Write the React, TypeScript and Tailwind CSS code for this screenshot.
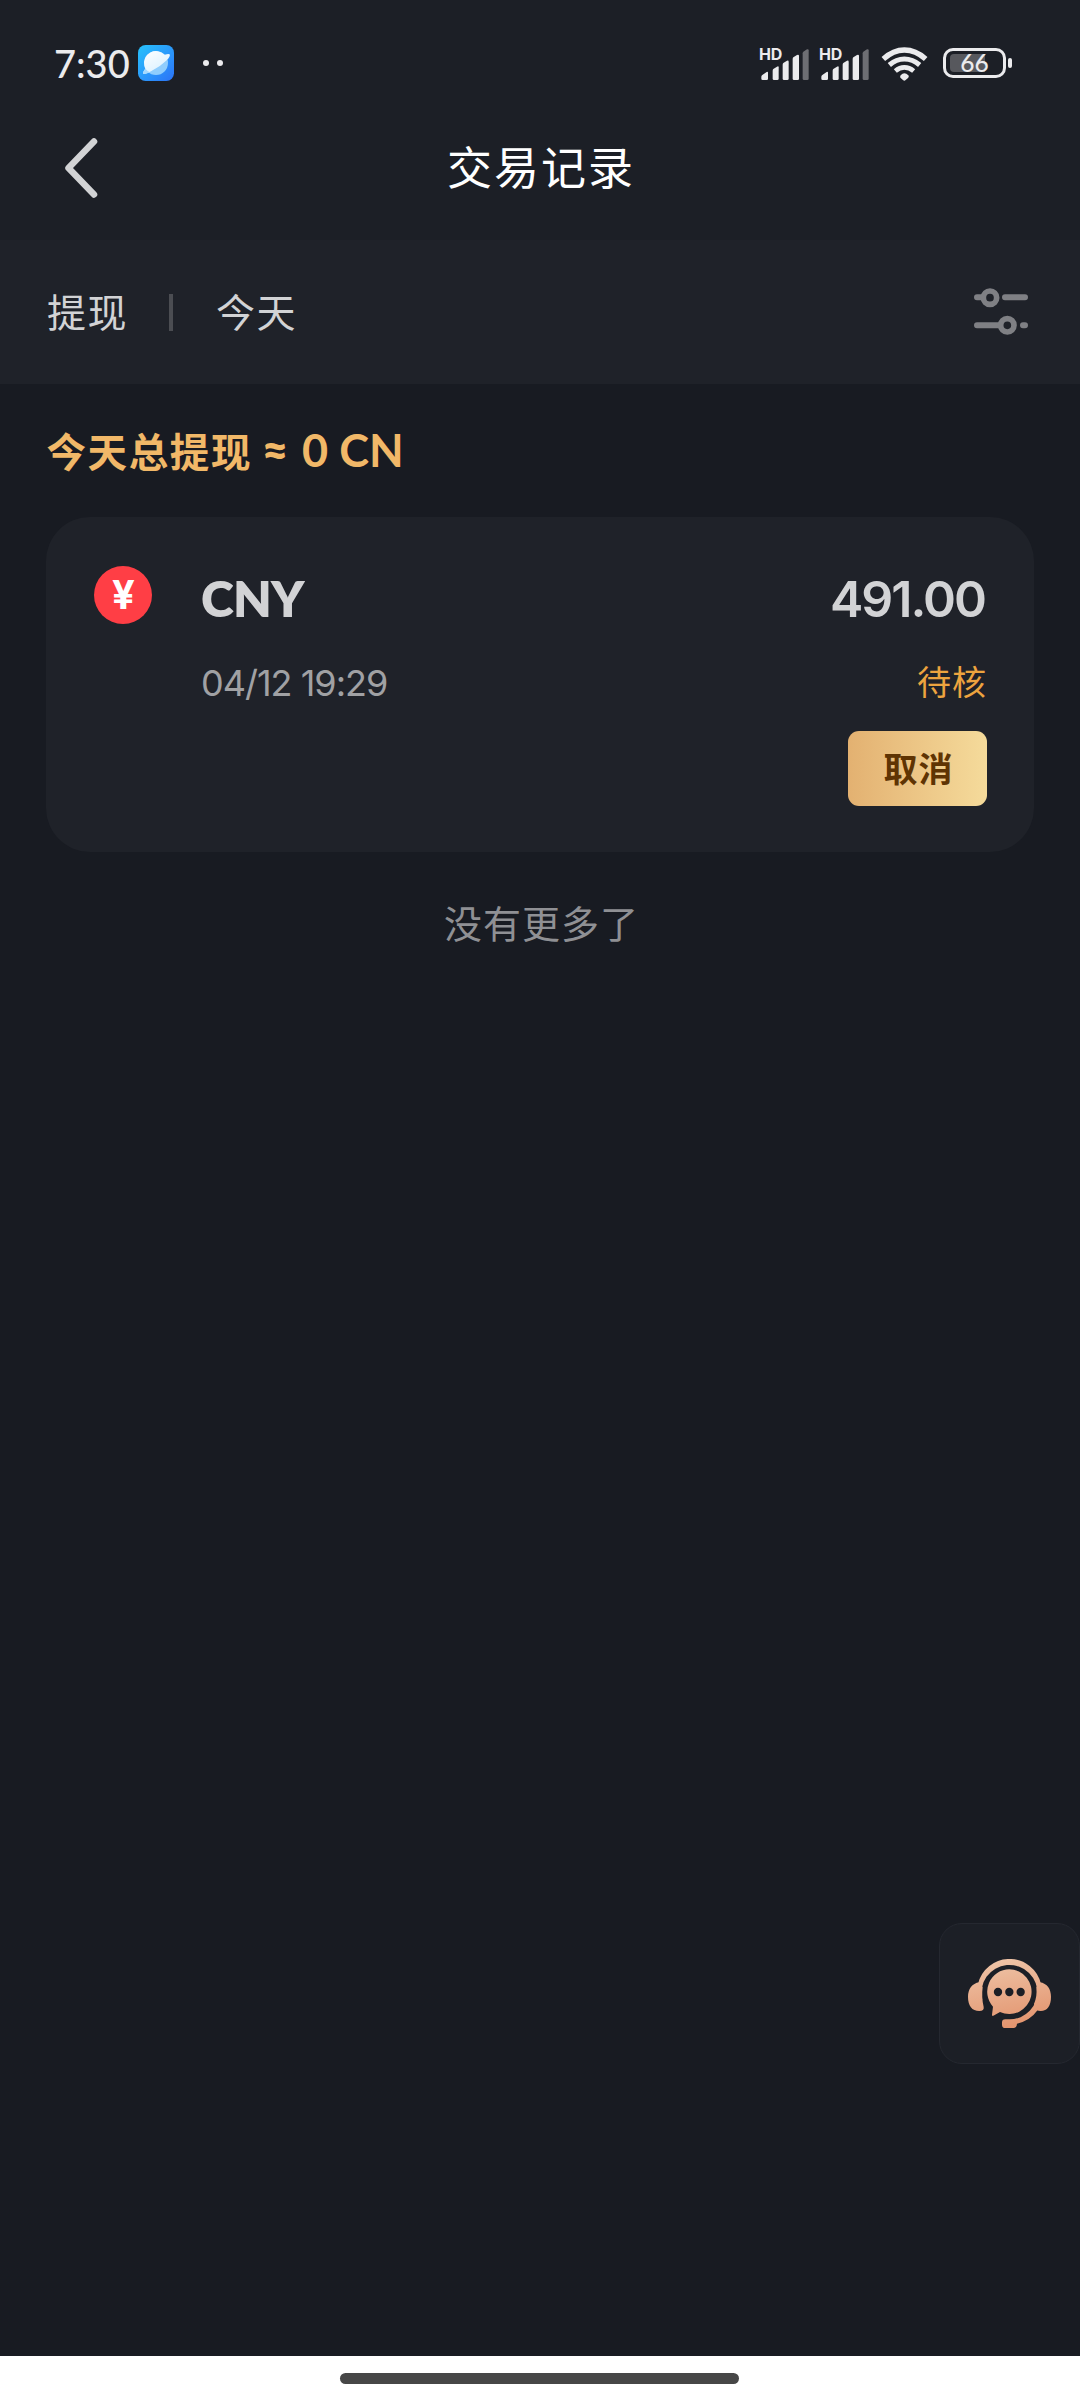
import React from "react";

function BrowserIcon() {
  return (
    <svg className="h-9 w-9" viewBox="0 0 108 108">
      <defs>
        <linearGradient id="sky" x1="0" y1="0" x2="1" y2="1">
          <stop offset="0" stopColor="#27c2fb" />
          <stop offset="0.55" stopColor="#2b97fb" />
          <stop offset="1" stopColor="#2b72f6" />
        </linearGradient>
        <linearGradient id="planet" x1="0" y1="0" x2="0.7" y2="1">
          <stop offset="0" stopColor="#ffffff" />
          <stop offset="1" stopColor="#d8f0ff" />
        </linearGradient>
      </defs>
      <rect width="108" height="108" rx="23" fill="url(#sky)" />
      <circle cx="54" cy="54" r="36" fill="#8fcdfd" />
      <path d="M19 62 A36 36 0 0 1 80 29 Q92 25 95 28 Q98 34 86 46 Q66 66 39 79 Q18 90 16 86 Q14 80 22 71Z" fill="url(#planet)" />
      <path d="M22 71 Q12 84 17 87 Q23 88 36 82 Q28 78 22 71Z" fill="#a5dafe" />
    </svg>
  );
}

function Signal() {
  return (
    <div className="relative h-[35px] w-[50px]">
      <span className="absolute left-0 top-px font-[Inter] text-[16px] leading-[14px] font-bold tracking-[-0.2px]">HD</span>
      <svg className="h-[35px] w-[50px]" viewBox="57 45 150 105" fill="#ebebed">
        <path d="M64 143 V137 Q64 134 67 132 L80 123 Q84 121 84 125 V143 Q84 147 80 147 H68 Q64 147 64 143Z" />
        <path d="M98 143 V119 Q98 116 100 114 L111 107 Q116 104 116 109 V143 Q116 147 112 147 H102 Q98 147 98 143Z" />
        <path d="M128 143 V101 Q128 98 130 96 L141 89 Q146 87 146 92 V143 Q146 147 142 147 H132 Q128 147 128 143Z" />
        <path d="M158 143 V84 Q158 81 160 79 L171 72 Q177 70 177 75 V143 Q177 147 173 147 H162 Q158 147 158 143Z" />
        <path fill="#6d6e73" d="M188 143 V67 Q188 64 190 62 L201 55 Q206 53 206 58 V143 Q206 147 202 147 H192 Q188 147 188 143Z" />
      </svg>
    </div>
  );
}

function Wifi() {
  return (
    <svg className="h-[35px] w-[47px]" viewBox="424 46 141 105" fill="none" stroke="#ebebed">
      <path d="M431 85 Q461 58 494 58 Q528 58 558 85" strokeWidth="16" />
      <path d="M449 103 Q470 85 494 85 Q519 85 540 103" strokeWidth="15" />
      <path d="M467 121 Q480 110 494 110 Q509 110 522 121" strokeWidth="14" />
      <path d="M483 134 Q494 122 506 134 Q509 138 505 142 L498 148 Q494 152 490 148 L483 142 Q480 138 483 134Z" fill="#ebebed" stroke="none" />
    </svg>
  );
}

function Battery() {
  return (
    <div className="flex items-center gap-[2px]">
      <div className="relative h-[30px] w-[63px] rounded-[10px] border-[3px] border-[#ebebed]">
        <div className="absolute left-[4px] top-[3px] h-[18px] w-[35px] rounded-l-[4px] bg-[#57585d]" />
        <div className="absolute inset-0 text-center font-[Lato] text-[24.5px] leading-[24px] font-medium">66</div>
      </div>
      <div className="h-[10px] w-[4px] rounded-[2px] bg-[#ebebed]" />
    </div>
  );
}

function StatusBar() {
  return (
    <div className="flex h-[126px] justify-between pl-[54px] pr-[68px] pt-[38px] text-[#ebebed]">
      <div className="flex h-[50px] items-center">
        <span className="w-[84px] pb-px font-[Lato] text-[38px] leading-[50px] font-medium">7:30</span>
        <BrowserIcon />
        <span className="ml-[29px] flex gap-2">
          <i className="h-[6px] w-[6px] rounded-full bg-[#ebebed]" />
          <i className="h-[6px] w-[6px] rounded-full bg-[#ebebed]" />
        </span>
      </div>
      <div className="flex h-[50px] items-center">
        <Signal />
        <div className="w-[10px]" />
        <Signal />
        <div className="w-[12px]" />
        <Wifi />
        <div className="w-[15px]" />
        <Battery />
      </div>
    </div>
  );
}

function FilterIcon() {
  return (
    <svg className="h-[48px] w-[54px]" viewBox="102 176 162 144" fill="none" stroke="#7f8084" strokeWidth="18" strokeLinecap="round">
      <path d="M111 204H126M195 204H255M111 288H180M249 288H255" />
      <circle cx="150" cy="205" r="20" strokeWidth="17" />
      <circle cx="202" cy="288" r="20" strokeWidth="17" />
    </svg>
  );
}

function SupportIcon() {
  return (
    <svg className="h-[69px] w-[83px]" viewBox="144 177 249 207">
      <defs>
        <linearGradient id="copper" gradientUnits="userSpaceOnUse" x1="250" y1="177" x2="290" y2="384">
          <stop offset="0" stopColor="#eec3a6" />
          <stop offset="1" stopColor="#e3936d" />
        </linearGradient>
      </defs>
      <g fill="url(#copper)">
        <path d="M178 247 C156 250 144 268 144 290 C144 317 156 333 178 333 Q193 333 191 321 Q184 292 188 262Z" />
        <path d="M359 247 C382 250 393 268 393 290 C393 317 382 333 362 333 Q355 333 349 330 L342 312 Q352 290 349 262Z" />
        <path d="M174 252 A97 97 0 0 1 363 252 L352 285 A84 84 0 1 0 187 300 L178 285Z" />
        <path d="M352 268 A83 83 0 0 1 268 358 H256 Q246 358 246 368 V374 Q246 384 256 384 H280 Q290 384 291 371 Q330 363 355 328Z" />
        <path d="M268 208 A67 67 0 1 1 240 336 L220 347 Q215 349 216 344 L219 320 A67 67 0 0 1 268 208Z" />
      </g>
      <g fill="#1c1f26">
        <circle cx="234" cy="276" r="12.5" />
        <circle cx="268" cy="276" r="12.5" />
        <circle cx="302" cy="276" r="12.5" />
      </g>
    </svg>
  );
}

export default function App() {
  return (
    <div className="relative flex h-[2400px] w-[1080px] flex-col overflow-hidden bg-[#181b22] font-['Noto_Sans_CJK_SC',sans-serif]">
      <header className="h-[240px] bg-[#1c1f26]">
        <StatusBar />
        <div className="grid h-[78px] grid-cols-3 items-center px-[65px]">
          <svg className="mt-[6px] h-[60px] w-[33px]" viewBox="0 0 33 60" fill="none" stroke="#d2d3d5" strokeWidth="6.5" strokeLinecap="round" strokeLinejoin="round">
            <path d="M29 3.5 L3.5 30 L29 56.5" />
          </svg>
          <h1 className="pl-[2px] pt-[2px] text-center text-[45px] leading-[60px] tracking-[2px] whitespace-nowrap text-white">交易记录</h1>
        </div>
      </header>

      <div className="flex h-[144px] items-center bg-[#1f2229] pl-[47px] pr-[52px] text-[39px] leading-[60px] tracking-[1.6px] text-[#d2d3d5]">
        <span className="w-[122px] pb-[5px]">提现</span>
        <span className="h-[37px] w-[4px] bg-[#4b4d52]" />
        <span className="grow pb-[5px] pl-[43px]">今天</span>
        <FilterIcon />
      </div>

      <main className="grow px-[46px]">
        <div className="flex h-[133px] items-baseline pl-[0.5px] pt-[36px] font-semibold leading-[60px] text-[#f1b868]">
          <span className="text-[39.5px] tracking-[1.6px]">今天总提现</span>
          <span className="ml-[10px] font-[Lato] text-[45px] font-extrabold">≈</span>
          <span className="ml-[14px] font-[Lato] text-[45px] font-bold whitespace-pre">0 CN</span>
        </div>

        <section className="flex h-[335px] rounded-[44px] bg-[#1f2229] pl-[48px] pr-[47px] pt-[48px]">
          <div className="mt-px h-[58px] w-[58px] rounded-full bg-[#ff3e45] pl-px text-center font-[Inter] text-[40px] leading-[58px] font-bold text-white">¥</div>
          <div className="ml-[49px] grow pt-[3px]">
            <div className="font-[Lato] text-[50px] leading-[60px] font-extrabold tracking-[-0.8px] text-[#d2d3d5]">CNY</div>
            <div className="mt-[30px] font-[Inter] text-[36px] leading-[50px] tracking-[-1px] text-[#a0a1a4]">04/12 19:29</div>
          </div>
          <div className="flex flex-col items-end pt-[4px]">
            <div className="mr-[2px] font-[Inter] text-[50px] leading-[60px] font-semibold tracking-[-2px] text-[#d2d3d5]">491.00</div>
            <div className="mt-[27px] text-[34px] leading-[50px] tracking-[1px] text-[#eda43f]">待核</div>
            <button className="mt-[25px] h-[75px] w-[139px] rounded-[11px] bg-linear-to-r from-[#e3b171] to-[#f5db9b] pb-[2px] pl-[2px] text-[34px] leading-[50px] font-semibold tracking-[1px] text-[#5f3403]">取消</button>
          </div>
        </section>

        <p className="mt-[39.5px] pl-[3px] text-center text-[38px] leading-[60px] tracking-[1px] text-[#8f9094]">没有更多了</p>
      </main>

      <footer className="flex h-[44px] justify-center bg-white pr-px pt-[17px]">
        <div className="h-[11px] w-[399px] rounded-full bg-[#474747]" />
      </footer>

      <button className="absolute left-[939px] top-[1923px] flex h-[141px] w-[141px] items-start rounded-[23px] border border-[#252830] bg-[#1c1f26] pl-[28px] pt-[35px]">
        <SupportIcon />
      </button>
    </div>
  );
}
